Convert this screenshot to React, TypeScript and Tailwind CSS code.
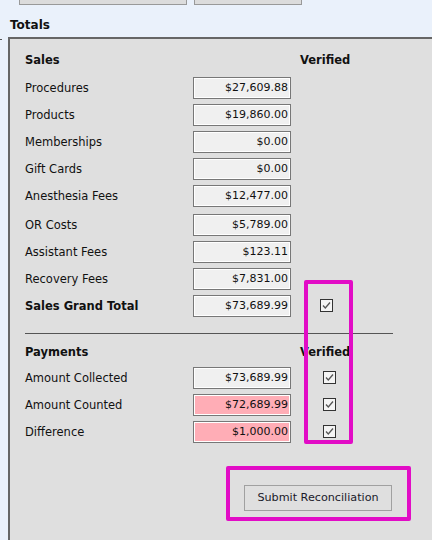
import React from "react";

const font = { fontFamily: '"DejaVu Sans", Verdana, sans-serif' };

function Check() {
  return (
    <div className="w-[13px] h-[13px] border border-[#333] bg-[#f4f4f4] flex items-center justify-center">
      <svg width="11" height="11" viewBox="0 0 11 11">
        <path d="M2 5.5 L4.3 8 L9 2.5" fill="none" stroke="#555" strokeWidth="1.3" />
      </svg>
    </div>
  );
}

type Row = { label: string; value: string; pink?: boolean; bold?: boolean; check?: boolean; extra?: boolean };

const sales: Row[] = [
  { label: "Procedures", value: "$27,609.88" },
  { label: "Products", value: "$19,860.00" },
  { label: "Memberships", value: "$0.00" },
  { label: "Gift Cards", value: "$0.00" },
  { label: "Anesthesia Fees", value: "$12,477.00" },
  { label: "OR Costs", value: "$5,789.00", extra: true },
  { label: "Assistant Fees", value: "$123.11" },
  { label: "Recovery Fees", value: "$7,831.00" },
  { label: "Sales Grand Total", value: "$73,689.99", bold: true, check: true },
];

const payments: Row[] = [
  { label: "Amount Collected", value: "$73,689.99", check: true },
  { label: "Amount Counted", value: "$72,689.99", pink: true, check: true },
  { label: "Difference", value: "$1,000.00", pink: true, check: true },
];

function RowView({ r, checkOffset }: { r: Row; checkOffset: string }) {
  return (
    <div className={`flex items-center h-[27px] ${r.extra ? "mt-[2px]" : ""}`}>
      <div className={`w-[168px] pt-[2px] text-[11.5px] text-[#111] ${r.bold ? "font-bold" : ""}`}>{r.label}</div>
      <div
        className={`w-[98px] h-[22px] border border-[#777] shadow-[inset_0_0_0_1px_#ffffff] flex items-center justify-end pr-[2px] pt-[1px] text-[11px] text-[#111] ${
          r.pink ? "bg-[#ffadb6]" : "bg-[#f0f0f0]"
        }`}
      >
        {r.value}
      </div>
      {r.check && (
        <div className={checkOffset}>
          <Check />
        </div>
      )}
    </div>
  );
}

export default function App() {
  return (
    <div className="w-[432px] h-[540px] bg-[#eaf1fb] overflow-hidden relative" style={font}>
      <div className="flex h-[5px]">
        <div className="ml-[19px] w-[168px] h-[5px] bg-[#dcdcdc] border border-t-0 border-[#999]" />
        <div className="ml-[7px] w-[108px] h-[5px] bg-[#dcdcdc] border border-t-0 border-[#999]" />
      </div>
      <div className="pl-[10px] pt-[11px] h-[32px] text-[12px] font-bold text-[#111]">Totals</div>
      <div className="ml-[8px] w-[440px] h-[520px] bg-[#dfdfdf] border-l-2 border-t-2 border-[#666] pl-[15px] pt-[11px]">
        <div className="flex items-center h-[22px] text-[11.5px] font-bold text-[#111]">
          <div className="w-[275px]">Sales</div>
          <div>Verified</div>
        </div>
        <div className="mt-[2px]">
          {sales.map((r) => (
            <RowView key={r.label} r={r} checkOffset="ml-[29px]" />
          ))}
        </div>
        <div className="mt-[14px] w-[368px] h-px bg-[#555]" />
        <div className="mt-[9px] flex items-center h-[20px] text-[11.5px] font-bold text-[#111]">
          <div className="w-[275px]">Payments</div>
          <div>Verified</div>
        </div>
        <div className="mt-[1px]">
          {payments.map((r) => (
            <RowView key={r.label} r={r} checkOffset="ml-[32px]" />
          ))}
        </div>
        <div className="mt-[40px] ml-[219px] w-[148px] h-[26px] border border-[#a0a0a0] flex items-center justify-center text-[11.2px] text-[#1a1a2a]">
          Submit Reconciliation
        </div>
      </div>
      <div className="absolute left-[304px] top-[280px] w-[49px] h-[164px] border-4 border-[#e20cc6] rounded-[2px]" />
      <div className="absolute left-[226px] top-[466px] w-[185px] h-[55px] border-4 border-[#e20cc6] rounded-[2px]" />
      <div className="absolute left-0 top-[39px] w-[2px] h-px bg-[#555]" />
    </div>
  );
}
